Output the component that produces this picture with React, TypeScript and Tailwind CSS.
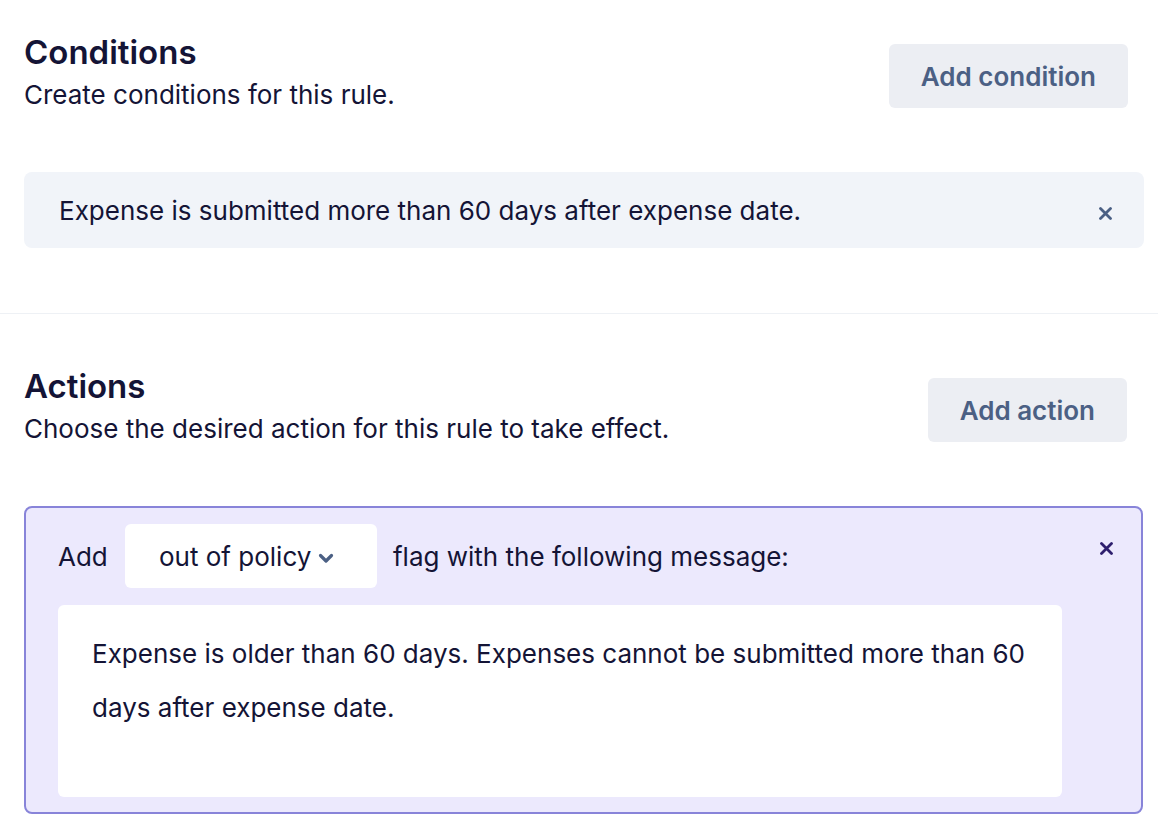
const font = { fontFamily: 'Inter, Lato, sans-serif' };

function CloseIcon({ className }: { className?: string }) {
  return (
    <svg width="13" height="13" viewBox="0 0 13 13" fill="none" className={className}>
      <path d="M1.5 1.5L11.5 11.5M11.5 1.5L1.5 11.5" stroke="currentColor" strokeWidth="2.8" strokeLinecap="round" />
    </svg>
  );
}

function SectionHeader({ title, subtitle, button }: { title: string; subtitle: string; button: string }) {
  return (
    <div className="flex items-start justify-between">
      <div>
        <h2 className="text-[33px] leading-[40px] font-semibold text-[#141436]">{title}</h2>
        <p className="mt-[6px] text-[26px] leading-[34px] text-[#141436]">{subtitle}</p>
      </div>
      <button className="mt-[12px] mr-[16px] h-[64px] rounded-[6px] bg-[#eceef3] px-[32px] text-[26px] font-semibold text-[#4b6084]">
        {button}
      </button>
    </div>
  );
}

export default function App() {
  return (
    <div className="min-h-[830px] w-[1158px] bg-white" style={font}>
      <section className="pt-[32px] pb-[65px] pl-[24px] pr-[14px]">
        <SectionHeader title="Conditions" subtitle="Create conditions for this rule." button="Add condition" />
        <div className="mt-[60px] flex h-[76px] items-center justify-between rounded-[8px] bg-[#f1f4f9] pl-[35px] pr-[32px]">
          <span className="text-[26px] text-[#141436]">Expense is submitted more than 60 days after expense date.</span>
          <CloseIcon className="mt-[6px] text-[#4b6084]" />
        </div>
      </section>
      <div className="h-px bg-[#eef1f5]" />
      <section className="pt-[52px] pb-[16px] pl-[24px] pr-[15px]">
        <SectionHeader title="Actions" subtitle="Choose the desired action for this rule to take effect." button="Add action" />
        <div className="mt-[60px] rounded-[8px] border-2 border-[#8884d9] bg-[#ece9fd] pt-[16px] pb-[15px] pl-[32px] pr-[28px]">
          <div className="flex items-start justify-between">
            <div className="flex items-center">
              <span className="w-[67px] text-[26px] text-[#141436]">Add</span>
              <div className="flex h-[64px] w-[252px] items-center rounded-[6px] bg-white pl-[34px]">
                <span className="text-[26px] text-[#141436]">out of policy</span>
                <svg width="16" height="11" viewBox="0 0 16 11" fill="none" className="ml-[7px] mt-[4px] text-[#4b6084]">
                  <path d="M2.5 2.5L8 8L13.5 2.5" stroke="currentColor" strokeWidth="3.2" strokeLinecap="round" strokeLinejoin="round" />
                </svg>
              </div>
              <span className="ml-[16px] text-[26px] text-[#141436]">flag with the following message:</span>
            </div>
            <CloseIcon className="mt-[18px] text-[#2e1f6e]" />
          </div>
          <div className="mt-[17px] mr-[51px] h-[192px] rounded-[6px] bg-white pl-[34px] pr-[34px] pt-[22px]">
            <p className="text-[26px] leading-[54px] text-[#141436]">
              Expense is older than 60 days. Expenses cannot be submitted more than 60 days after expense date.
            </p>
          </div>
        </div>
      </section>
    </div>
  );
}
